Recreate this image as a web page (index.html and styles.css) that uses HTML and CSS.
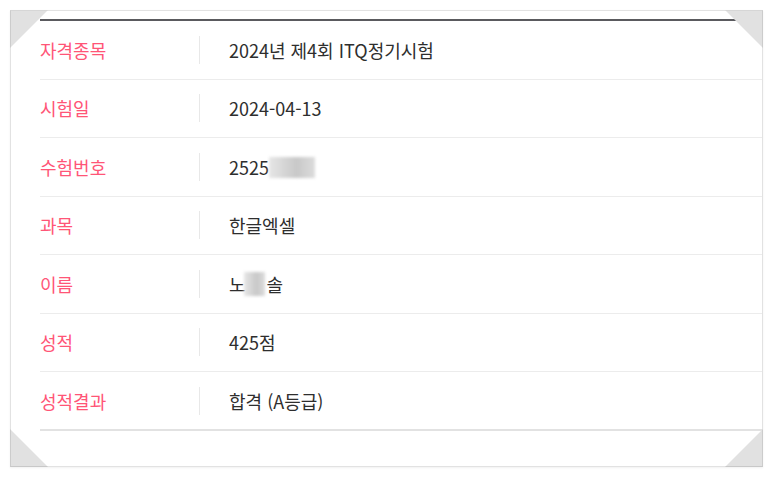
FILE: index.html
```html
<!DOCTYPE html>
<html lang="ko">
<head>
<meta charset="utf-8">
<link rel="stylesheet" href="styles.css">
</head>
<body>
<div class="frame">
  <span class="corner tl"></span>
  <span class="corner tr"></span>
  <span class="corner bl"></span>
  <span class="corner br"></span>
  <div class="table">
    <div class="row"><div class="label">자격종목</div><div class="value">2024년 제4회 ITQ정기시험</div></div>
    <div class="row"><div class="label">시험일</div><div class="value">2024-04-13</div></div>
    <div class="row"><div class="label">수험번호</div><div class="value">2525<span class="blur wide"></span></div></div>
    <div class="row"><div class="label">과목</div><div class="value">한글엑셀</div></div>
    <div class="row"><div class="label">이름</div><div class="value">노<span class="blur small"></span>솔</div></div>
    <div class="row"><div class="label">성적</div><div class="value">425점</div></div>
    <div class="row last"><div class="label">성적결과</div><div class="value">합격 (A등급)</div></div>
  </div>
</div>
</body>
</html>
```
FILE: styles.css
```css
html, body {
  margin: 0;
  padding: 0;
  background: #fff;
}
body {
  font-family: "Noto Sans CJK KR", "Noto Sans", sans-serif;
  width: 773px;
  height: 478px;
  overflow: hidden;
}
.frame {
  position: relative;
  margin: 10px 0 0 10px;
  border: 1px solid #e2e2e2;
  box-shadow: 0 1px 2px rgba(0,0,0,0.06);
  padding: 8px 0 0 29px;
  box-sizing: content-box;
  width: 722px;
  height: 447px;
}
.corner {
  position: absolute;
  width: 38px;
  height: 38px;
  background: #e1e1e1;
  box-sizing: border-box;
}
.corner.tl { left: -1px; top: -1px; clip-path: polygon(0 0, 100% 0, 0 100%); border-left: 1px solid #ccc; border-top: 1px solid #d6d6d6; }
.corner.tr { right: -1px; top: -1px; clip-path: polygon(0 0, 100% 0, 100% 100%); border-right: 1px solid #ccc; border-top: 1px solid #d6d6d6; }
.corner.bl { left: -1px; bottom: -1px; clip-path: polygon(0 0, 100% 100%, 0 100%); border-left: 1px solid #ccc; border-bottom: 1px solid #c8c8c8; }
.corner.br { right: -1px; bottom: -1px; clip-path: polygon(100% 0, 100% 100%, 0 100%); border-right: 1px solid #ccc; border-bottom: 1px solid #c8c8c8; }
.table {
  border-top: 2px solid #5a5a5e;
}
.row {
  display: flex;
  align-items: center;
  height: 57.5px;
  border-bottom: 1px solid #ececec;
}
.row.last {
  height: 57px;
  border-bottom: 2px solid #e2e2e2;
}
.label {
  width: 160px;
  color: #ff5577;
  font-size: 18px;
  line-height: 28px;
  height: 28px;
  border-right: 1px solid #e8e8e8;
  box-sizing: border-box;
}
.value {
  padding-left: 29px;
  color: #2e2e2e;
  font-size: 18px;
  line-height: 28px;
  display: flex;
  align-items: center;
}
.blur {
  display: inline-block;
  background: linear-gradient(90deg, #e6e6e6, #c8c8c8 60%, #dcdcdc);
  filter: blur(1.5px);
}
.blur.wide { width: 46px; height: 21px; margin-top: 2px; }
.blur.small { width: 21px; height: 24px; margin: 0 2px 0 -2px; }
```
